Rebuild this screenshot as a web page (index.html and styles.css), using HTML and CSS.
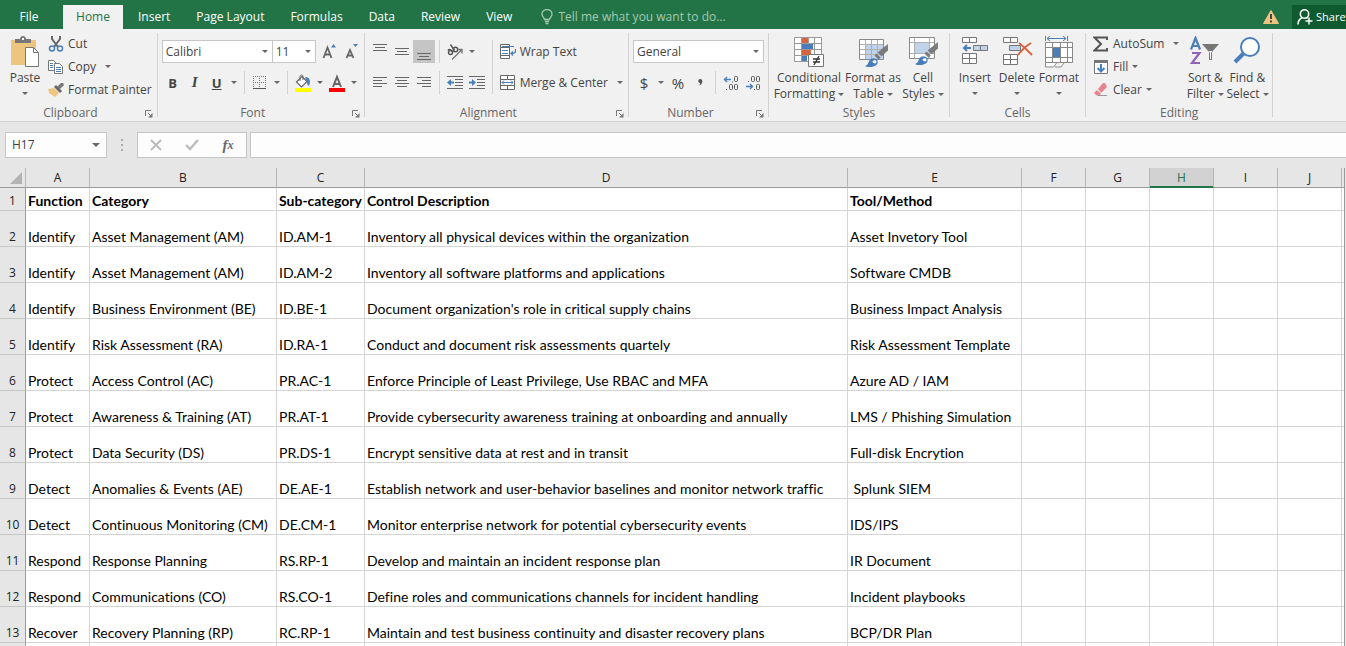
FILE: index.html
```html
<!DOCTYPE html>
<html lang="en">
<head>
<meta charset="utf-8">
<title>Workbook</title>
<link rel="stylesheet" href="styles.css">
</head>
<body>
<svg class="defs" aria-hidden="true">
  <symbol id="i-brush" viewBox="0 0 24 24">
    <path d="M23 1v6l-6 6-4-4z" fill="#7b7b7b"/><path d="M12 10l4 4-2 2-4-4z" fill="#7b7b7b"/>
    <path d="M1 22c3-1 3-3 4-5 2-3 6-3 8 0 1 4-3 6-7 6-2 0-4 0-5-1z" fill="#4a7ebb"/>
    <path d="M8 18c1-2 4-2 4 0s-2 2-3 1" fill="#fff"/>
  </symbol>
  <symbol id="i-launch" viewBox="0 0 8 8">
    <path d="M.5 6V.5H6M3 3l3 3" fill="none" stroke="#777"/><path d="M7.500 3v4.500H3z" fill="#777"/>
  </symbol>
</svg>

<header class="titlebar">
  <nav class="tabs">
    <button class="tab file">File</button>
    <button class="tab active">Home</button>
    <button class="tab">Insert</button>
    <button class="tab">Page Layout</button>
    <button class="tab">Formulas</button>
    <button class="tab">Data</button>
    <button class="tab">Review</button>
    <button class="tab">View</button>
  </nav>
  <label class="tell">
    <svg width="12" height="16" viewBox="0 0 12 16"><path d="M3.500 10.500C3.500 8.500 1 8 1 5a5 4.500 0 0 1 10 0c0 3-2.500 3.500-2.500 5.500zM4 12.500h4M4.500 14.500h3" fill="none" stroke="#a3c9b1" stroke-width="1.300"/></svg>
    <input type="text" placeholder="Tell me what you want to do..." aria-label="Tell me what you want to do">
  </label>
  <svg class="warn" width="16" height="14" viewBox="0 0 16 14"><path d="M8 .5L15.500 13.500H.5z" fill="#edc581" stroke="#edc581" stroke-linejoin="round"/><path d="M8 4v5M8 10.500v2" stroke="#444" stroke-width="2"/></svg>
  <button class="share">
    <svg width="16" height="16" viewBox="0 0 16 16"><g fill="none" stroke="#fff" stroke-width="1.500"><circle cx="7.500" cy="5" r="4.200"/><path d="M1 15.500c0-4 2-6 4.500-7M9 8.500l1.500 1M12 8.500v7M8.500 12h7"/></g></svg>
    <span>Share</span>
  </button>
</header>

<div class="ribbon">
  <section class="group">
    <div class="body clip">
      <button class="big paste">
        <svg width="30" height="32" viewBox="0 0 30 32"><path d="M1 4h25v25H1z" fill="#ecc57f"/><path d="M5 7V3h5c0-4 6-4 6 0h5v4z" fill="#777"/><path d="M12 2h2v2h-2z" fill="#fff"/><path d="M15.500 11.500h8l5 5v14h-13z" fill="#fff" stroke="#777"/><path d="M23.500 11.500v5h5" fill="none" stroke="#777"/></svg>
        <span>Paste</span><i class="caret"></i>
      </button>
      <div class="stack">
        <button class="item"><svg width="16" height="16" viewBox="0 0 16 16"><path d="M4 0v3l6 8M12 0v3l-6 8" stroke="#666" stroke-width="2" fill="none"/><g fill="none" stroke="#4a7ebb" stroke-width="1.500"><circle cx="4" cy="12.500" r="2.500"/><circle cx="12" cy="12.500" r="2.500"/></g></svg><span>Cut</span></button>
        <button class="item"><svg width="16" height="16" viewBox="0 0 16 16"><g fill="#fff" stroke="#777"><path d="M.5 1.500h5l3 3v7h-8z"/><path d="M6.500 4.500h5l3 3v7h-8z"/></g><path d="M2 4.500h3M2 6.500h3M2 8.500h3M8 8.500h5M8 10.500h5M8 12.500h5" stroke="#4a7ebb"/></svg><span>Copy</span><i class="caret far"></i></button>
        <button class="item"><svg width="16" height="16" viewBox="0 0 16 16"><path d="M0 7l6-1 5 5-4 4-6-4z" fill="#ecc57f"/><path d="M6 5l2-2 6 6-2 2z" fill="#666"/><path d="M9 5l4-4 2 0 1 2-4 4z" fill="#777"/></svg><span>Format Painter</span></button>
      </div>
    </div>
    <footer class="has-launch">Clipboard<button class="launch" aria-label="Clipboard settings"><svg width="8" height="8"><use href="#i-launch"/></svg></button></footer>
  </section>

  <section class="group">
    <div class="body rows font">
      <div class="row fields">
        <label class="pick fontname"><select aria-label="Font"><option>Calibri</option></select><i class="caret"></i></label>
        <label class="pick fontsize"><select aria-label="Font size"><option>11</option></select><i class="caret"></i></label>
        <button class="sq grow" aria-label="Increase font size"><svg width="16" height="16" viewBox="0 0 16 16"><path d="M1.500 14L5.500 3.500 9.500 14M3 10.500h5" fill="none" stroke="#666" stroke-width="1.800"/><path d="M9 3.500L11.500 0 14 3.500z" fill="#4a7ebb"/></svg></button>
        <button class="sq" aria-label="Decrease font size"><svg width="16" height="16" viewBox="0 0 16 16"><path d="M2.500 14L6 6 9.500 14M4 11.500h4" fill="none" stroke="#666" stroke-width="1.800"/><path d="M9 0h5l-2.500 3z" fill="#4a7ebb"/></svg></button>
      </div>
      <div class="row">
        <button class="sq b">B</button><button class="sq it">I</button><button class="sq u">U</button><button class="drop" aria-label="Underline options"><i class="caret"></i></button>
        <hr>
        <button class="sq" aria-label="Borders"><svg width="14" height="14" viewBox="0 0 14 14"><path d="M0 .5h13M0 6.500h13M.5 0v12M6.500 0v12M12.500 0v12" stroke="#777" stroke-dasharray="1 1" fill="none"/><path d="M0 12.500h13" stroke="#555"/></svg></button><button class="drop" aria-label="Border options"><i class="caret"></i></button>
        <hr>
        <button class="sq" aria-label="Fill color"><svg width="18" height="18" viewBox="0 0 18 18"><path d="M2.500 8L8 2.500l5 5L7.500 13z" fill="#fff" stroke="#666" stroke-width="1.200"/><path d="M6 7V2.500C6 .5 9 .5 9 2.500V6" fill="none" stroke="#666"/><path d="M11 3c5 0 6 4 4 9-2-1-2-4-2-4z" fill="#4a7ebb"/><path d="M1 14h16v4H1z" fill="#ff0"/></svg></button><button class="drop" aria-label="Fill options"><i class="caret"></i></button>
        <button class="sq" aria-label="Font color"><svg width="18" height="18" viewBox="0 0 18 18"><path d="M5 13L9 3l4 10M6.500 10h5" fill="none" stroke="#666" stroke-width="2"/><path d="M1 14h16v4H1z" fill="#f00"/></svg></button><button class="drop" aria-label="Font color options"><i class="caret"></i></button>
      </div>
    </div>
    <footer class="has-launch">Font<button class="launch" aria-label="Font settings"><svg width="8" height="8"><use href="#i-launch"/></svg></button></footer>
  </section>

  <section class="group">
    <div class="body align">
      <div class="rows">
        <div class="row">
          <button class="sq" aria-label="Top align"><svg width="14" height="16" viewBox="0 0 14 16"><path d="M0 .5h14M2 3.500h10M0 6.500h14" stroke="#666"/></svg></button>
          <button class="sq" aria-label="Middle align"><svg width="14" height="16" viewBox="0 0 14 16"><path d="M0 4.500h14M2 7.500h10M0 10.500h14" stroke="#666"/></svg></button>
          <button class="sq on" aria-label="Bottom align"><svg width="14" height="16" viewBox="0 0 14 16"><path d="M0 9.500h14M2 12.500h10M0 15.500h14" stroke="#666"/></svg></button>
          <hr>
          <button class="sq" aria-label="Orientation"><svg width="18" height="16" viewBox="0 0 18 16"><g fill="none" stroke="#555" stroke-width="1.400"><circle cx="4.500" cy="8.500" r="2"/><path d="M2 6.500c1-2 3-1 5 2"/><circle cx="9.500" cy="5.500" r="2.200"/><path d="M4.500 0.500l4 6"/></g><path d="M6 15.500L16 5.500M12 5.500h4v4" fill="none" stroke="#777" stroke-width="1.400"/></svg></button><button class="drop" aria-label="Orientation options"><i class="caret"></i></button>
        </div>
        <div class="row">
          <button class="sq" aria-label="Align left"><svg width="14" height="12" viewBox="0 0 14 12"><path d="M0 .5h14M0 3.500h9M0 6.500h14M0 9.500h9" stroke="#666"/></svg></button>
          <button class="sq" aria-label="Center"><svg width="14" height="12" viewBox="0 0 14 12"><path d="M0 .5h14M2 3.500h10M0 6.500h14M2 9.500h10" stroke="#666"/></svg></button>
          <button class="sq" aria-label="Align right"><svg width="14" height="12" viewBox="0 0 14 12"><path d="M0 .5h14M5 3.500h9M0 6.500h14M5 9.500h9" stroke="#666"/></svg></button>
          <hr>
          <button class="sq" aria-label="Decrease indent"><svg width="16" height="14" viewBox="0 0 16 14"><path d="M0 .5h16M8 3.500h8M8 6.500h8M8 9.500h8M0 12.500h16" stroke="#666"/><path d="M0 6.500L4 3v2.500h3v2H4V10z" fill="#4a7ebb"/></svg></button>
          <button class="sq" aria-label="Increase indent"><svg width="16" height="14" viewBox="0 0 16 14"><path d="M0 .5h16M8 3.500h8M8 6.500h8M8 9.500h8M0 12.500h16" stroke="#666"/><path d="M7 6.500L3 3v2.500H0v2h3V10z" fill="#4a7ebb"/></svg></button>
        </div>
      </div>
      <div class="rows wraps">
        <button class="item"><svg width="16" height="16" viewBox="0 0 16 16"><g fill="#fff" stroke="#666"><path d="M.5.5h9v3h-9zM.5 3.500h9v8h-9zM.5 11.500h9v3h-9z"/></g><path d="M2 2.500h12M2 6.500h6M2 9.500h6" stroke="#4a7ebb"/><path d="M15.500 5v2c0 2-2 2.500-4 2.500M13 7.500l-2 2 2 2" fill="none" stroke="#4a7ebb" stroke-width="1.300"/></svg><span>Wrap Text</span></button>
        <button class="item"><svg width="16" height="16" viewBox="0 0 16 16"><path d="M.5.5h14v14H.5zM.5 4.500h14M.5 10.500h14M7.500.5v4M7.500 10.500v4" fill="#fff" stroke="#666"/><path d="M2 7.500h11M4 5.500l-2 2 2 2M11 5.500l2 2-2 2" fill="none" stroke="#4a7ebb"/></svg><span>Merge &amp; Center</span><i class="caret far"></i></button>
      </div>
    </div>
    <footer class="has-launch">Alignment<button class="launch" aria-label="Alignment settings"><svg width="8" height="8"><use href="#i-launch"/></svg></button></footer>
  </section>

  <section class="group">
    <div class="body rows">
      <div class="row fields"><label class="pick format"><select aria-label="Number format"><option>General</option></select><i class="caret"></i></label></div>
      <div class="row">
        <button class="sq sym">$</button><button class="drop" aria-label="Currency options"><i class="caret"></i></button>
        <button class="sq sym">%</button>
        <button class="sq" aria-label="Comma style"><svg width="8" height="14" viewBox="0 0 8 14"><path d="M4 3c2 0 3 2 2 4-.5 1.500-2 2.500-3 2.500 1-1 1.500-2 1-2.500-2 0-2.500-4 0-4z" fill="#555"/></svg></button>
        <hr>
        <button class="sq" aria-label="Increase decimal"><svg width="16" height="16" viewBox="0 0 16 16"><path d="M1 4.500h7M4 2L1.500 4.500 4 7" fill="none" stroke="#4a7ebb" stroke-width="1.400"/><g fill="none" stroke="#555"><path d="M9 7h1M3 14.500h1"/><rect x="11.500" y="1.500" width="3" height="5" rx="1"/><rect x="6.500" y="9.500" width="3" height="5" rx="1"/><rect x="11.500" y="9.500" width="3" height="5" rx="1"/></g></svg></button>
        <button class="sq" aria-label="Decrease decimal"><svg width="16" height="16" viewBox="0 0 16 16"><path d="M1 11.500h7M5 9l2.500 2.500L5 14" fill="none" stroke="#4a7ebb" stroke-width="1.400"/><g fill="none" stroke="#555"><path d="M3 6.500h1M9 14.500h1"/><rect x="6.500" y="1.500" width="3" height="5" rx="1"/><rect x="11.500" y="1.500" width="3" height="5" rx="1"/><rect x="11.500" y="9.500" width="3" height="5" rx="1"/></g></svg></button>
      </div>
    </div>
    <footer class="has-launch">Number<button class="launch" aria-label="Number settings"><svg width="8" height="8"><use href="#i-launch"/></svg></button></footer>
  </section>

  <section class="group">
    <div class="body styles">
      <button class="big wide"><svg width="32" height="32" viewBox="0 0 32 32"><path d="M1.500 1.500h27v24h-27z" fill="#fff"/><path d="M1.500 1.500h27v24h-27zM8.500 1.500v24M15.500 1.500v24M21.500 1.500v24M1.500 7.500h27M1.500 13.500h27M1.500 19.500h27" fill="none" stroke="#999"/><path d="M9 2h6v5H9zM9 14h9v5H9z" fill="#d9623f"/><path d="M9 8h11v5H9zM9 20h5v5H9z" fill="#4a7ebb"/><path d="M15.500 18.500h15v12h-15z" fill="#fff" stroke="#777"/><path d="M20 23h7M20 26h7M26 20l-5 9" stroke="#333" stroke-width="1.300"/></svg><span>Conditional</span><span class="l2">Formatting<i class="caret"></i></span></button>
      <button class="big mid"><svg width="32" height="32" viewBox="0 0 32 32"><path d="M2.500 3.500h24v20h-24z" fill="#fff"/><path d="M9 9h17v14H9z" fill="#c0d3ea"/><path d="M8.500 3.500v20M14.500 3.500v20M20.500 3.500v20M2.500 8.500h24M2.500 13.500h24M2.500 18.500h24" fill="none" stroke="#b0b0b0"/><path d="M2.500 3.500h24v20h-24z" fill="none" stroke="#888"/><use href="#i-brush" x="7" y="7" width="25" height="25"/></svg><span>Format as</span><span class="l2">Table<i class="caret"></i></span></button>
      <button class="big"><svg width="32" height="32" viewBox="0 0 32 32"><path d="M2.500 1.500h25v21h-25z" fill="#fff"/><path d="M7.500 1.500v21M22.500 1.500v21M2.500 6.500h25M2.500 17.500h25" fill="none" stroke="#b0b0b0"/><path d="M2.500 1.500h25v21h-25z" fill="none" stroke="#888"/><path d="M8 7h14v10H8z" fill="#c0d3ea"/><use href="#i-brush" x="7" y="5" width="25" height="25"/></svg><span>Cell</span><span class="l2">Styles<i class="caret"></i></span></button>
    </div>
    <footer>Styles</footer>
  </section>

  <section class="group">
    <div class="body cells">
      <button class="big"><svg width="32" height="32" viewBox="0 0 32 32"><g stroke="#777"><path d="M3.500 1.500h14v5h-14zM10.500 1.500v5M3.500 17.500h14v10h-14zM10.500 17.500v10M3.500 22.500h14" fill="#fff"/><path d="M14.500 9.500h14v5h-14zM21.500 9.500v5" fill="#c0d3ea"/></g><path d="M5 12h7M8 9l-3 3 3 3" fill="none" stroke="#4a7ebb" stroke-width="2"/></svg><span>Insert</span><i class="caret"></i></button>
      <button class="big"><svg width="32" height="32" viewBox="0 0 32 32"><g stroke="#777"><path d="M2.500 1.500h14v5h-14zM9.500 1.500v5M2.500 18.500h14v10h-14zM9.500 18.500v10M2.500 23.500h14" fill="#fff"/><path d="M8.500 9.500h11v5h-11z" fill="#c0d3ea"/></g><path d="M18 7c4 3 9 8 13 12M30 7c-5 3-10 8-13 12" fill="none" stroke="#d9623f" stroke-width="2"/></svg><span>Delete</span><i class="caret"></i></button>
      <button class="big"><svg width="32" height="32" viewBox="0 0 32 32"><path d="M2.500 0v5M24.500 0v5M4 2.500h19M7 0L4 2.500 7 5M20 0l3 2.500L20 5" fill="none" stroke="#4a7ebb"/><path d="M2.500 6.500h27v20h-27zM2.500 27v4h8l3-4M12 31h6l3-4M9.500 6.500v20M17.500 6.500v20M24.500 6.500v20M2.500 11.500h27M2.500 21.500h27" fill="#fff" stroke="#888"/><path d="M10 12h7v9h-7z" fill="#4a7ebb"/></svg><span>Format</span><i class="caret"></i></button>
    </div>
    <footer>Cells</footer>
  </section>

  <section class="group">
    <div class="body edit">
      <div class="stack">
        <button class="item"><svg width="16" height="16" viewBox="0 0 16 16"><path d="M14 4V1.500H1.500L8 8l-6.500 6.500H14V12" fill="none" stroke="#555" stroke-width="2"/></svg><span>AutoSum</span><i class="caret far"></i></button>
        <button class="item"><svg width="16" height="16" viewBox="0 0 16 16"><path d="M1.500 1.500h13v13h-13z" fill="#fff" stroke="#777"/><path d="M1 1h14v3H1z" fill="#777"/><path d="M8 5v7.500M4.500 9L8 12.500 11.500 9" fill="none" stroke="#4a7ebb" stroke-width="2"/></svg><span>Fill</span><i class="caret"></i></button>
        <button class="item"><svg width="16" height="16" viewBox="0 0 16 16"><path d="M5 7l5-6h2l2 4-6 6z" fill="#e8848f"/><path d="M4 8l4 4-2 1.500H3.500L1 11z" fill="#e8848f"/><path d="M5 13.500h9" stroke="#999"/></svg><span>Clear</span><i class="caret"></i></button>
      </div>
      <button class="big"><svg width="32" height="32" viewBox="0 0 32 32"><path d="M2 13.500L6.500 2 11 13.500M3.500 10h6" fill="none" stroke="#4a7ebb" stroke-width="2.200"/><path d="M3 17h7.500L3 27h8" fill="none" stroke="#9164b8" stroke-width="2.200"/><path d="M13 8h17l-7 8v8h-3v-8z" fill="#777"/><path d="M20 15h3l-1 2v6h-1v-6z" fill="#fff"/></svg><span>Sort &amp;</span><span class="l2">Filter<i class="caret"></i></span></button>
      <button class="big"><svg width="32" height="32" viewBox="0 0 32 32"><circle cx="19" cy="11" r="9" fill="#fff" stroke="#4a7ebb" stroke-width="2"/><path d="M12.500 17.500L4 26" stroke="#4a7ebb" stroke-width="4"/></svg><span>Find &amp;</span><span class="l2">Select<i class="caret"></i></span></button>
    </div>
    <footer>Editing</footer>
  </section>
</div>

<div class="formulabar">
  <div class="namebox"><input type="text" value="H17" aria-label="Name box"><button aria-label="Names"><i class="caret"></i></button></div>
  <span class="grip"></span>
  <div class="fx">
    <button aria-label="Cancel"><svg width="12" height="12" viewBox="0 0 12 12"><path d="M1 1l10 10M11 1L1 11" stroke="#bbb" stroke-width="1.800"/></svg></button>
    <button aria-label="Enter"><svg width="14" height="12" viewBox="0 0 14 12"><path d="M1 6l4 4 8-9" fill="none" stroke="#bbb" stroke-width="2.400"/></svg></button>
    <button class="fn">f<sub>x</sub></button>
  </div>
  <input class="formula" type="text" aria-label="Formula">
</div>

<main class="sheet">
<table>
  <colgroup><col class="rh"><col class="ca"><col class="cb"><col class="cc"><col class="cd"><col class="ce"><col class="cx"><col class="cx"><col class="cx"><col class="cx"><col class="cx"><col></colgroup>
  <thead><tr><th class="corner"><svg width="12" height="12" viewBox="0 0 12 12"><path d="M12 0v12H0z" fill="#b4b4b4"/></svg></th><th>A</th><th>B</th><th>C</th><th>D</th><th>E</th><th>F</th><th>G</th><th class="sel">H</th><th>I</th><th>J</th><th></th></tr></thead>
  <tbody>
    <tr class="head"><th>1</th><td>Function</td><td>Category</td><td>Sub-category</td><td>Control Description</td><td>Tool/Method</td><td></td><td></td><td></td><td></td><td></td><td></td></tr>
    <tr><th>2</th><td>Identify</td><td>Asset Management (AM)</td><td>ID.AM-1</td><td>Inventory all physical devices within the organization</td><td>Asset Invetory Tool</td><td></td><td></td><td></td><td></td><td></td><td></td></tr>
    <tr><th>3</th><td>Identify</td><td>Asset Management (AM)</td><td>ID.AM-2</td><td>Inventory all software platforms and applications</td><td>Software CMDB</td><td></td><td></td><td></td><td></td><td></td><td></td></tr>
    <tr><th>4</th><td>Identify</td><td>Business Environment (BE)</td><td>ID.BE-1</td><td>Document organization's role in critical supply chains</td><td>Business Impact Analysis</td><td></td><td></td><td></td><td></td><td></td><td></td></tr>
    <tr><th>5</th><td>Identify</td><td>Risk Assessment (RA)</td><td>ID.RA-1</td><td>Conduct and document risk assessments quartely</td><td>Risk Assessment Template</td><td></td><td></td><td></td><td></td><td></td><td></td></tr>
    <tr><th>6</th><td>Protect</td><td>Access Control (AC)</td><td>PR.AC-1</td><td>Enforce Principle of Least Privilege, Use RBAC and MFA</td><td>Azure AD / IAM</td><td></td><td></td><td></td><td></td><td></td><td></td></tr>
    <tr><th>7</th><td>Protect</td><td>Awareness &amp; Training (AT)</td><td>PR.AT-1</td><td>Provide cybersecurity awareness training at onboarding and annually</td><td>LMS / Phishing Simulation</td><td></td><td></td><td></td><td></td><td></td><td></td></tr>
    <tr><th>8</th><td>Protect</td><td>Data Security (DS)</td><td>PR.DS-1</td><td>Encrypt sensitive data at rest and in transit</td><td>Full-disk Encrytion</td><td></td><td></td><td></td><td></td><td></td><td></td></tr>
    <tr><th>9</th><td>Detect</td><td>Anomalies &amp; Events (AE)</td><td>DE.AE-1</td><td>Establish network and user-behavior baselines and monitor network traffic</td><td>&nbsp;Splunk SIEM</td><td></td><td></td><td></td><td></td><td></td><td></td></tr>
    <tr><th>10</th><td>Detect</td><td>Continuous Monitoring (CM)</td><td>DE.CM-1</td><td>Monitor enterprise network for potential cybersecurity events</td><td>IDS/IPS</td><td></td><td></td><td></td><td></td><td></td><td></td></tr>
    <tr><th>11</th><td>Respond</td><td>Response Planning</td><td>RS.RP-1</td><td>Develop and maintain an incident response plan</td><td>IR Document</td><td></td><td></td><td></td><td></td><td></td><td></td></tr>
    <tr><th>12</th><td>Respond</td><td>Communications (CO)</td><td>RS.CO-1</td><td>Define roles and communications channels for incident handling</td><td>Incident playbooks</td><td></td><td></td><td></td><td></td><td></td><td></td></tr>
    <tr><th>13</th><td>Recover</td><td>Recovery Planning (RP)</td><td>RC.RP-1</td><td>Maintain and test business continuity and disaster recovery plans</td><td>BCP/DR Plan</td><td></td><td></td><td></td><td></td><td></td><td></td></tr>
    <tr><th></th><td></td><td></td><td></td><td></td><td></td><td></td><td></td><td></td><td></td><td></td><td></td></tr>
  </tbody>
</table>
</main>
</body>
</html>
```
FILE: styles.css
```css
* { box-sizing: border-box; }
html, body { height: 100%; }
body { margin: 0; overflow: hidden; display: flex; flex-direction: column; background: #e6e6e6; color: #444; font: 12px/16px "Open Sans", sans-serif; }
button, input, select { font: inherit; color: inherit; border: 0; padding: 0; margin: 0; background: none; outline: 0; border-radius: 0; }
button { display: flex; align-items: center; justify-content: center; white-space: nowrap; flex: none; }
svg { display: block; flex: none; }
.defs { position: absolute; width: 0; height: 0; }
.caret { display: block; flex: none; width: 0; height: 0; border: 3px solid transparent; border-top-color: #666; border-bottom: 0; }

.titlebar { display: flex; align-items: flex-end; flex: none; height: 29px; background: #227447; color: #fff; overflow: hidden; }
.tabs { display: flex; }
.tab { height: 24px; padding: 0 13px; }
.tab.file { width: 63px; padding: 0 5px 0 0; }
.tab.active { width: 60px; margin-right: 2px; background: #f1f1f1; color: #227447; }
.tell { display: flex; align-items: center; gap: 5px; height: 24px; padding-left: 16px; flex: 1; }
.tell input { width: 200px; }
.tell input::placeholder { color: #a3c9b1; opacity: 1; }
.warn { margin: 0 13px 5px 0; }
.share { height: 24px; width: 54px; gap: 3px; padding-left: 5px; background: #0f5b2f; justify-content: flex-start; font-size: 11px; }

.ribbon { display: flex; flex: none; height: 93px; background: #f1f1f1; border-bottom: 1px solid #d2d2d2; }
.group { display: flex; flex-direction: column; flex: none; margin: 4px 0; border-right: 1px solid #d2d2d2; }
.body { display: flex; flex: 1; padding: 0 4px; }
.group footer { position: relative; height: 14px; line-height: 20px; text-align: center; color: #666; }
.group .has-launch { padding-right: 16px; }
.launch { position: absolute; right: 2px; bottom: -3px; padding: 2px; }
.body.clip { padding: 0 5px 0 8px; }
.big { flex-direction: column; justify-content: flex-start; width: 42px; padding-top: 3px; line-height: 16px; color: #444; }
.big svg { margin-bottom: 2px; }
.big > .caret { margin-top: 6px; }
.big.wide { width: 70px; }
.big.mid { width: 58px; }
.big.paste { width: 34px; }
.l2 { display: flex; align-items: center; gap: 3px; }
.stack { display: flex; flex-direction: column; margin-top: -1px; padding-left: 6px; }
.item { height: 23px; gap: 4px; justify-content: flex-start; }
.far { margin-left: 5px; }
.rows { display: flex; flex-direction: column; gap: 8px; padding: 7px 4px 0; justify-content: flex-start; }
.rows.font { padding-right: 1px; }
.row { display: flex; align-items: center; height: 23px; }
.sq { width: 22px; height: 23px; }
.sq.on { background: #c5c5c5; }
.drop { width: 12px; height: 23px; }
.b { font-weight: 700; font-size: 13px; }
.it { font: italic 700 15px "Liberation Serif", serif; }
.u { font-weight: 700; font-size: 13px; text-decoration: underline; }
.sym { font-size: 15px; }
hr { width: 1px; height: 23px; margin: 0 4px; border: 0; background: #d2d2d2; }
.pick { position: relative; display: block; height: 23px; border: 1px solid #c6c6c6; background: #fff; }
.pick select { appearance: none; width: 100%; height: 21px; padding-left: 3px; }
.pick .caret { position: absolute; right: 4px; top: 9px; }
.fontname { width: 111px; }
.fontsize { width: 43px; border-left: 0; }
.grow { margin-left: 3px; }
.format { width: 131px; }
.body.align { padding: 0; }
.rows.wraps { margin-top: 7px; padding: 0 5px 0 7px; height: 54px; border-left: 1px solid #d2d2d2; }
.body.styles { padding: 0 5px; }
.body.cells { padding-right: 5px; }
.body.edit { padding-right: 4px; }
.edit .stack { padding: 0 5px 0 3px; }

.formulabar { display: flex; flex: none; height: 46px; padding: 10px 0 10px 5px; }
.namebox, .fx, .formula { border: 1px solid #c6c6c6; background: #fdfdfd; }
.namebox { display: flex; width: 102px; }
.namebox input { flex: 1; min-width: 0; padding-left: 6px; }
.namebox button { width: 20px; }
.namebox .caret { border-width: 4px 4px 0; }
.grip { width: 2px; height: 12px; margin: 7px 14px; background: repeating-linear-gradient(#aaa 0 2px, transparent 2px 5px); }
.fx { display: flex; width: 110px; }
.fx button { flex: 1; }
.fx .fn { font: italic 700 15px "Liberation Serif", serif; color: #666; }
.fn sub { font-size: 12px; line-height: 8px; }
.formula { flex: 1; margin-left: 3px; border-right: 0; padding: 0 6px; }

.sheet { flex: 1; min-height: 0; overflow: hidden; margin-right: 1px; }
table { width: 100%; table-layout: fixed; border-collapse: separate; border-spacing: 0; border-right: 1px solid #9b9b9b; background: #fff; color: #000; font: 14px/16px Lato, "Open Sans", sans-serif; font-variant-ligatures: none; }
.rh { width: 26px; } .ca { width: 64px; } .cb { width: 187px; } .cc { width: 88px; } .cd { width: 483px; } .ce { width: 174px; } .cx { width: 64px; }
th { padding: 0; background: #e6e6e6; font-weight: 400; color: #222; font-family: "Open Sans", sans-serif; font-size: 12px; }
thead th { height: 20px; border-right: 1px solid #b5b5b5; border-bottom: 1px solid #9b9b9b; }
thead th:last-child { border-right: 0; }
.corner svg { margin: 1px 0 0 10px; }
thead .sel { background: #d2d2d2; color: #227447; border-bottom-color: #227447; box-shadow: inset 0 -1px #227447; }
tbody th { padding-bottom: 1px; border-right: 1px solid #9b9b9b; border-bottom: 1px solid #c6c6c6; vertical-align: bottom; }
td { height: 36px; padding: 0 2px 1px; border-right: 1px solid #d4d4d4; border-bottom: 1px solid #d4d4d4; vertical-align: bottom; white-space: nowrap; }
td:last-child { border-right: 0; }
.head td { height: 23px; font-weight: 700; }
```
